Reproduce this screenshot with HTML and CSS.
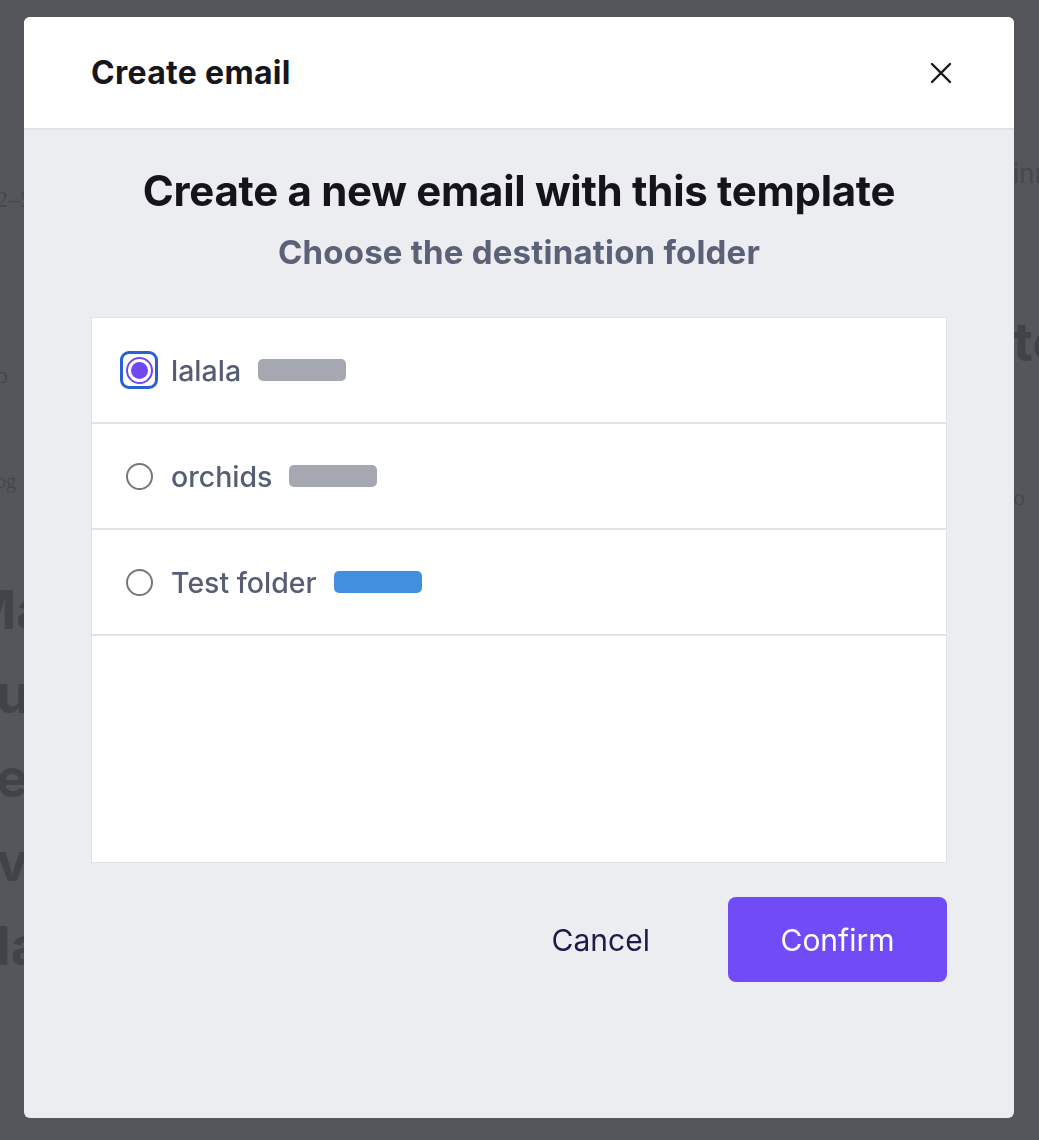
FILE: index.html
```html
<html>
<head>
  <title>Create email</title>
  <link rel="stylesheet" href="styles.css">
</head>
<body>

  <div class="page">
    <div class="page-left">
      <p class="meta first">2–5</p>
      <p class="meta spaced">o</p>
      <p class="meta small">og</p>
      <p class="big lead">Ma</p>
      <p class="big">u</p>
      <p class="big">ee</p>
      <p class="big">vi</p>
      <p class="big">la</p>
    </div>
    <div class="page-right">
      <p class="meta sans">inn</p>
      <p class="big">te</p>
      <p class="meta">o</p>
    </div>
  </div>

  <div class="modal">
    <div class="modal-header">
      <h1>Create email</h1>
      <button class="close" aria-label="Close">
        <svg width="22" height="22" viewBox="0 0 22 22">
          <path d="M2 2 L20 20 M20 2 L2 20" stroke="#16161b" stroke-width="2.4" stroke-linecap="round" fill="none"/>
        </svg>
      </button>
    </div>

    <div class="modal-body">
      <h2>Create a new email with this template</h2>
      <h3>Choose the destination folder</h3>

      <div class="folders">
        <label class="folder">
          <span class="radio checked"><span class="ring"><span class="dot"></span></span></span>
          <span class="name">lalala</span>
          <span class="tag"></span>
        </label>
        <label class="folder">
          <span class="radio"><span class="ring"></span></span>
          <span class="name">orchids</span>
          <span class="tag"></span>
        </label>
        <label class="folder">
          <span class="radio"><span class="ring"></span></span>
          <span class="name">Test folder</span>
          <span class="tag blue"></span>
        </label>
      </div>

      <div class="actions">
        <button class="cancel">Cancel</button>
        <button class="confirm">Confirm</button>
      </div>
    </div>
  </div>

</body>
</html>
```

FILE: styles.css
```css
body {
  margin: 0;
  background: #55565b;
  font-family: 'Inter', 'Noto Sans', sans-serif;
  overflow: hidden;
}

.page {
  display: flex;
  justify-content: space-between;
  height: 1140px;
}

.page p {
  margin: 0;
  white-space: nowrap;
}

.page-left {
  margin-left: -4px;
  padding-top: 186px;
  display: flex;
  flex-direction: column;
}

.page-right {
  width: 40px;
  margin-right: -14px;
  padding-top: 158px;
  display: flex;
  flex-direction: column;
}

.meta {
  font-family: 'Liberation Serif', serif;
  font-size: 24px;
  color: #46474c;
  height: 40px;
}

.meta.spaced {
  margin-top: 136px;
}

.meta.small {
  margin-top: 68px;
  font-size: 20px;
}

.meta.sans {
  font-family: 'Inter', sans-serif;
  font-size: 26px;
}

.big {
  font-size: 54px;
  font-weight: 700;
  color: #424348;
  line-height: 84px;
}

.big.lead {
  margin-top: 58px;
  margin-left: -30px;
}

.page-right .big {
  margin-top: 102px;
  margin-bottom: 100px;
}

/* modal */

.modal {
  position: fixed;
  left: 24px;
  top: 17px;
  width: 990px;
  height: 1101px;
  background: #ecedf0;
  border-radius: 6px;
  overflow: hidden;
  display: flex;
  flex-direction: column;
}

.modal-header {
  height: 111px;
  background: #fff;
  border-bottom: 2px solid #e1e2e6;
  display: flex;
  align-items: center;
  justify-content: space-between;
  padding: 0 62px 0 67px;
}

.modal-header h1 {
  margin: 0;
  font-size: 32px;
  font-weight: 700;
  color: #16161b;
  letter-spacing: 0.3px;
}

.close {
  background: none;
  border: none;
  padding: 0;
  cursor: pointer;
  display: flex;
}

.modal-body {
  padding: 0 67px;
  display: flex;
  flex-direction: column;
  align-items: center;
}

.modal-body h2 {
  margin: 35px 0 0;
  font-size: 42px;
  font-weight: 700;
  color: #14141a;
  letter-spacing: -0.3px;
}

.modal-body h3 {
  margin: 16px 0 0;
  font-size: 33px;
  font-weight: 700;
  color: #5b6176;
  letter-spacing: 0.2px;
}

.folders {
  align-self: stretch;
  margin-top: 45px;
  height: 546px;
  background: #fff;
  border: 1px solid #e1e2e6;
  box-sizing: border-box;
}

.folder {
  height: 106px;
  border-bottom: 2px solid #e3e4e8;
  box-sizing: border-box;
  display: flex;
  align-items: center;
  padding-left: 28px;
  gap: 13px;
}

.radio {
  width: 38px;
  height: 38px;
  box-sizing: border-box;
  border-radius: 9px;
  border: 3px solid transparent;
  display: flex;
  align-items: center;
  justify-content: center;
}

.radio .ring {
  width: 27px;
  height: 27px;
  box-sizing: border-box;
  border-radius: 50%;
  border: 2px solid #76767b;
  background: #fff;
  display: flex;
  align-items: center;
  justify-content: center;
}

.radio.checked {
  border-color: #2c5fd3;
}

.radio.checked .ring {
  border-color: #7048f0;
}

.radio .dot {
  width: 17px;
  height: 17px;
  border-radius: 50%;
  background: #7048f0;
}

.name {
  font-size: 28.5px;
  font-weight: 500;
  color: #565d74;
}

.tag {
  width: 88px;
  height: 22px;
  border-radius: 5px;
  background: #a6a8b1;
  margin-left: 4px;
}

.tag.blue {
  background: #4290dd;
}

.actions {
  align-self: stretch;
  display: flex;
  justify-content: flex-end;
  align-items: center;
  margin-top: 34px;
  gap: 78px;
}

.actions button {
  font-family: 'Inter', sans-serif;
  font-size: 30px;
  border: none;
  cursor: pointer;
}

.cancel {
  background: none;
  color: #1e1a4a;
  padding: 0;
}

.confirm {
  width: 219px;
  height: 85px;
  border-radius: 8px;
  background: #714bf5;
  color: #fff;
}
```
